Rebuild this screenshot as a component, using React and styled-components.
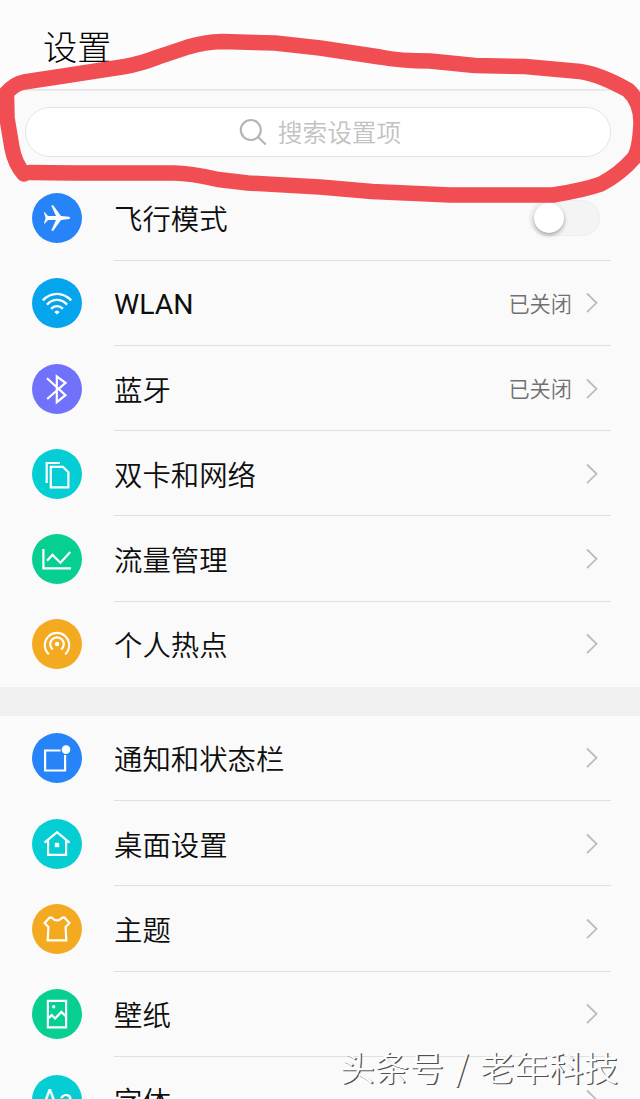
import React from "react";
import styled, { createGlobalStyle } from "styled-components";

const GlobalStyle = createGlobalStyle`
  * {
    box-sizing: border-box;
  }

  body {
    margin: 0;
    background: #fafafa;
    font-family: Roboto, "Noto Sans CJK SC", sans-serif;
  }
`;

// Styled Components
const Page = styled.div`
  position: relative;
  width: 640px;
  height: 1099px;
  overflow: hidden;
  background: #fafafa;
  color: #0e0e0e;
`;

const Header = styled.header`
  display: flex;
  align-items: center;
  height: 90px;
  padding: 7px 43px 0;
  background: #fcfcfc;
  border-bottom: 1px solid #e6e6e6;
  box-shadow: 0 1px 1px #ececec;
`;

const Title = styled.h1`
  margin: 0;
  font-size: 34.3px;
  line-height: 50px;
  font-weight: 300;
  color: #000;
`;

const SearchArea = styled.div`
  height: 85.3px;
  padding: 17px 29px 0 25px;
`;

const SearchBox = styled.div`
  display: flex;
  align-items: center;
  justify-content: center;
  gap: 11px;
  height: 50px;
  padding-left: 4px;
  border: 1px solid #e4e4e4;
  border-radius: 25px;
  background: #fff;
`;

const SearchHint = styled.span`
  padding-bottom: 2px;
  color: #c2c2c2;
  font-family: "Noto Sans CJK SC", sans-serif;
  font-size: 24.7px;
  line-height: 36px;
  font-weight: 350;
`;

const Group = styled.section`
  display: flex;
  flex-direction: column;
`;

const Separator = styled.div`
  height: 28.6px;
  background: #f0f0f0;
`;

const Row = styled.div`
  display: flex;
  align-items: center;
  gap: 32px;
  height: 85.3px;
  padding: 0 29px 0 32px;
`;

const Badge = styled.div`
  display: flex;
  flex: none;
  align-items: center;
  justify-content: center;
  width: 50px;
  height: 50px;
  border-radius: 50%;
  background: ${({ $color }) => $color};
  color: #fff;
`;

const Glyph = styled.svg`
  width: 50px;
  height: 50px;
  fill: none;
  stroke: #fff;
  stroke-width: 2.2;
`;

const FontSample = styled.span`
  font-size: 27px;
  line-height: 32px;
  font-weight: 400;
`;

const RowBody = styled.div`
  display: flex;
  flex: 1;
  align-items: center;
  height: 100%;
  padding: 1px 12px 0 0;
  border-bottom: 1px solid ${({ $last }) => ($last ? "transparent" : "#e0e0e0")};
`;

const Label = styled.span`
  flex: 1;
  padding-top: ${({ $latin }) => ($latin ? "3px" : "6px")};
  font-size: 28.4px;
  line-height: 42px;
  font-weight: ${({ $latin }) => ($latin ? 400 : 350)};
`;

const Status = styled.span`
  margin-right: 13px;
  padding-top: 3px;
  color: #707070;
  font-size: 21.2px;
  line-height: 32px;
  font-weight: 350;
`;

const Chevron = styled.svg`
  width: 14px;
  height: 22px;
  fill: none;
  stroke: #bcbcbc;
  stroke-width: 1.8;
`;

const Switch = styled.div`
  width: 71px;
  height: 36px;
  margin-right: -1px;
  padding: 2px 4px;
  border: 1px solid #eee;
  border-radius: 18px;
  background: #f4f4f4;
`;

const Knob = styled.div`
  width: 30px;
  height: 30px;
  border-radius: 50%;
  background: #fff;
  box-shadow: 0 2px 4px rgba(0, 0, 0, 0.35);
`;

const Marker = styled.svg`
  position: absolute;
  top: 0;
  left: 0;
  width: 640px;
  height: 220px;
  fill: none;
  stroke: #f04e53;
  stroke-width: 15.5;
  stroke-linejoin: round;
  stroke-linecap: round;
`;

const Watermark = styled.div`
  position: absolute;
  right: 22px;
  bottom: 8px;
  color: #fcfcfc;
  font-family: "Noto Sans CJK SC", sans-serif;
  font-size: 34.6px;
  line-height: 50px;
  font-weight: 350;
  word-spacing: 3.5px;
  white-space: nowrap;
  text-shadow: 1.3px 1.3px 0 #505050;
`;

const icons = {
  plane: (
    <path
      d="M12.5 19 16 23h8l-4.7-10.4 1.8-.4L29 23l8 .8c1.6.4 1.6 1.9 0 2.3L29 27l-7.9 11-1.8-.5L24 27h-8l-3.5 3.8-.5-.4L13.6 25 12 19.4Z"
      fill="#fff"
      stroke="none"
    />
  ),
  wifi: (
    <g strokeWidth="2.4">
      <path d="M10.8 22.3Q17.1 15.9 25 15.9T39.2 22.3M14.9 26.6Q19.5 21.9 25 21.9T35.1 26.6M19.1 30.9Q21.7 28.1 25 28.1T30.9 30.9" />
      <path d="m25 36.6-2.7-2.6Q25 31 27.7 34Z" fill="#fff" stroke="none" />
    </g>
  ),
  bluetooth: <path d="m15 14.3 18.5 16.8-8.7 7.1V12.5l8.7 6.3L15.2 35" />,
  cards: <path d="M28 14H14.7v20M18.8 17.8h12l5.6 5.5v15H18.8Z" />,
  chart: <path d="M11.4 15v19.4H39M15 26.8l5.5-5.9 7.9 7.8L38.3 18" />,
  hotspot: (
    <>
      <path d="M16.8 35.2A12.2 12.2 0 1 1 33.2 35.2M20.8 30.5A6.8 6.8 0 1 1 29.2 30.5" />
      <circle cx="25" cy="25" r="2.3" fill="#fff" stroke="none" />
    </>
  ),
  notify: (
    <>
      <path d="M28.5 17.5H13.1v20h20V22" />
      <circle cx="34" cy="16.6" r="4.3" fill="#fff" stroke="none" />
    </>
  ),
  home: (
    <>
      <path d="M12.5 23.7 25 13.2l12.5 10.5M16.1 21.5v14.3h18V21.5" />
      <path d="M22.8 23.8h4.4v4.4h-4.4z" fill="#fff" stroke="none" />
    </>
  ),
  shirt: (
    <path d="M17.5 13.7h2.3q5.2 5.5 10.4 0h2.3l4.9 5.2-3.8 4.2.7 13.3H15.7l.7-13.3-3.8-4.2Z" />
  ),
  wallpaper: (
    <>
      <path d="M15.9 11.9h18.2v26.4H15.9ZM16 29.8l3.7-3.7 3.4 3.4 6.3-6.6 4.6 4.6" />
      <circle cx="21.7" cy="17.8" r="1.7" fill="#fff" stroke="none" />
    </>
  ),
};

const network = [
  { label: "飞行模式", icon: "plane", color: "#2684f8", toggle: true },
  { label: "WLAN", icon: "wifi", color: "#05a5ee", status: "已关闭", latin: true },
  { label: "蓝牙", icon: "bluetooth", color: "#7072fb", status: "已关闭" },
  { label: "双卡和网络", icon: "cards", color: "#04ced3" },
  { label: "流量管理", icon: "chart", color: "#07ce91" },
  { label: "个人热点", icon: "hotspot", color: "#f4aa20" },
];

const display = [
  { label: "通知和状态栏", icon: "notify", color: "#2684f8" },
  { label: "桌面设置", icon: "home", color: "#04ced3" },
  { label: "主题", icon: "shirt", color: "#f4aa20" },
  { label: "壁纸", icon: "wallpaper", color: "#07ce91" },
  { label: "字体", color: "#04ced3" },
];

const SettingRow = ({ item, last }) => (
  <Row>
    <Badge $color={item.color}>
      {item.icon ? (
        <Glyph viewBox="0 0 50 50">{icons[item.icon]}</Glyph>
      ) : (
        <FontSample>Aa</FontSample>
      )}
    </Badge>
    <RowBody $last={last}>
      <Label $latin={item.latin}>{item.label}</Label>
      {item.status && <Status>{item.status}</Status>}
      {item.toggle ? (
        <Switch>
          <Knob />
        </Switch>
      ) : (
        <Chevron viewBox="0 0 14 22">
          <path d="m2 1.5 9.5 9.3L2 20.2" />
        </Chevron>
      )}
    </RowBody>
  </Row>
);

const SettingGroup = ({ items }) => (
  <Group>
    {items.map((item, i) => (
      <SettingRow key={item.label} item={item} last={i === items.length - 1} />
    ))}
  </Group>
);

const App = () => {
  return (
    <Page>
      <GlobalStyle />
      <Header>
        <Title>设置</Title>
      </Header>
      <SearchArea>
        <SearchBox>
          <svg width="28" height="28" fill="none" stroke="#b5b5b5" strokeWidth="2.2">
            <circle cx="11.8" cy="12" r="10" />
            <path d="m19 19 7.8 7.5" />
          </svg>
          <SearchHint>搜索设置项</SearchHint>
        </SearchBox>
      </SearchArea>

      <SettingGroup items={network} />
      <Separator />
      <SettingGroup items={display} />

      {/* hand-drawn ring around the search bar */}
      <Marker viewBox="0 0 640 220">
        <path d="M24 174Q15 164 12 148L7 118 6.5 93Q14 84 24 82L70 75 125 66.5Q140 64 158 57L188 47Q205 42 222 41.5L275 43 320 48 380 57Q400 61 430 61L475 65.5 525 66.5 580 71.5Q599 74 628 90Q641 102 641 122Q640 149 634 158Q620 174 601 184Q584 190 553 195H450L372 191.5 320 187 248 183 218 179.5Q190 173 174 173H75L30 172.5" />
      </Marker>
      <Watermark>头条号 / 老年科技</Watermark>
    </Page>
  );
};

export default App;
